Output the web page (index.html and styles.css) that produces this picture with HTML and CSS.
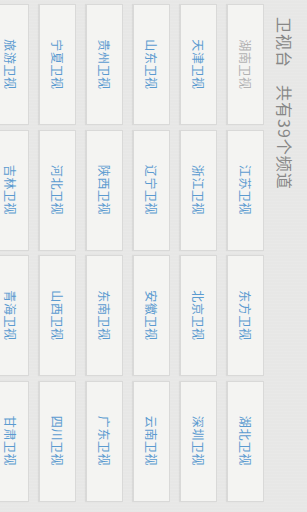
FILE: index.html
```html
<!DOCTYPE html>
<html lang="zh-CN">
<head>
<meta charset="utf-8">
<title>卫视台</title>
<link rel="stylesheet" href="styles.css">
</head>
<body>
<div class="frame">
<div class="screen">
  <div class="header">卫视台　共有39个频道</div>
  <div class="grid">
    <div class="tile muted">湖南卫视</div>
    <div class="tile">江苏卫视</div>
    <div class="tile">东方卫视</div>
    <div class="tile">湖北卫视</div>
    <div class="tile">天津卫视</div>
    <div class="tile">浙江卫视</div>
    <div class="tile">北京卫视</div>
    <div class="tile">深圳卫视</div>
    <div class="tile">山东卫视</div>
    <div class="tile">辽宁卫视</div>
    <div class="tile">安徽卫视</div>
    <div class="tile">云南卫视</div>
    <div class="tile">贵州卫视</div>
    <div class="tile">陕西卫视</div>
    <div class="tile">东南卫视</div>
    <div class="tile">广东卫视</div>
    <div class="tile">宁夏卫视</div>
    <div class="tile">河北卫视</div>
    <div class="tile">山西卫视</div>
    <div class="tile">四川卫视</div>
    <div class="tile">旅游卫视</div>
    <div class="tile">吉林卫视</div>
    <div class="tile">青海卫视</div>
    <div class="tile">甘肃卫视</div>
  </div>
</div>
</div>
</body>
</html>
```
FILE: styles.css
```css
html, body {
  margin: 0;
  padding: 0;
  width: 307px;
  height: 512px;
  overflow: hidden;
  background: #e7e7e6;
}
.frame {
  width: 307px;
  height: 512px;
  overflow: hidden;
}
.screen {
  width: 512px;
  height: 307px;
  transform-origin: 0 0;
  transform: translateX(307px) rotate(90deg);
  background-color: #e7e7e6;
  background-image: repeating-linear-gradient(90deg, rgba(255,255,255,0.07) 0 1px, rgba(0,0,0,0) 1px 3px);
  font-family: "Noto Sans CJK SC", "Noto Sans", sans-serif;
  overflow: hidden;
}
.header {
  height: 43px;
  display: flex;
  align-items: center;
  padding-left: 17px;
  font-size: 16px;
  letter-spacing: 1px;
  color: #878787;
}
.grid {
  display: grid;
  grid-template-columns: repeat(4, 121px);
  grid-auto-rows: 37px;
  column-gap: 4.5px;
  row-gap: 10px;
  padding-left: 4px;
}
.tile {
  box-sizing: border-box;
  background: #f4f4f2;
  border: 1px solid #d9d9d8;
  box-shadow: 0 1px 1px rgba(0,0,0,0.06);
  display: flex;
  align-items: center;
  justify-content: center;
  font-size: 12px;
  letter-spacing: 0.6px;
  color: #5b9bd0;
}
.tile.muted {
  color: #b2b2b2;
}
```
